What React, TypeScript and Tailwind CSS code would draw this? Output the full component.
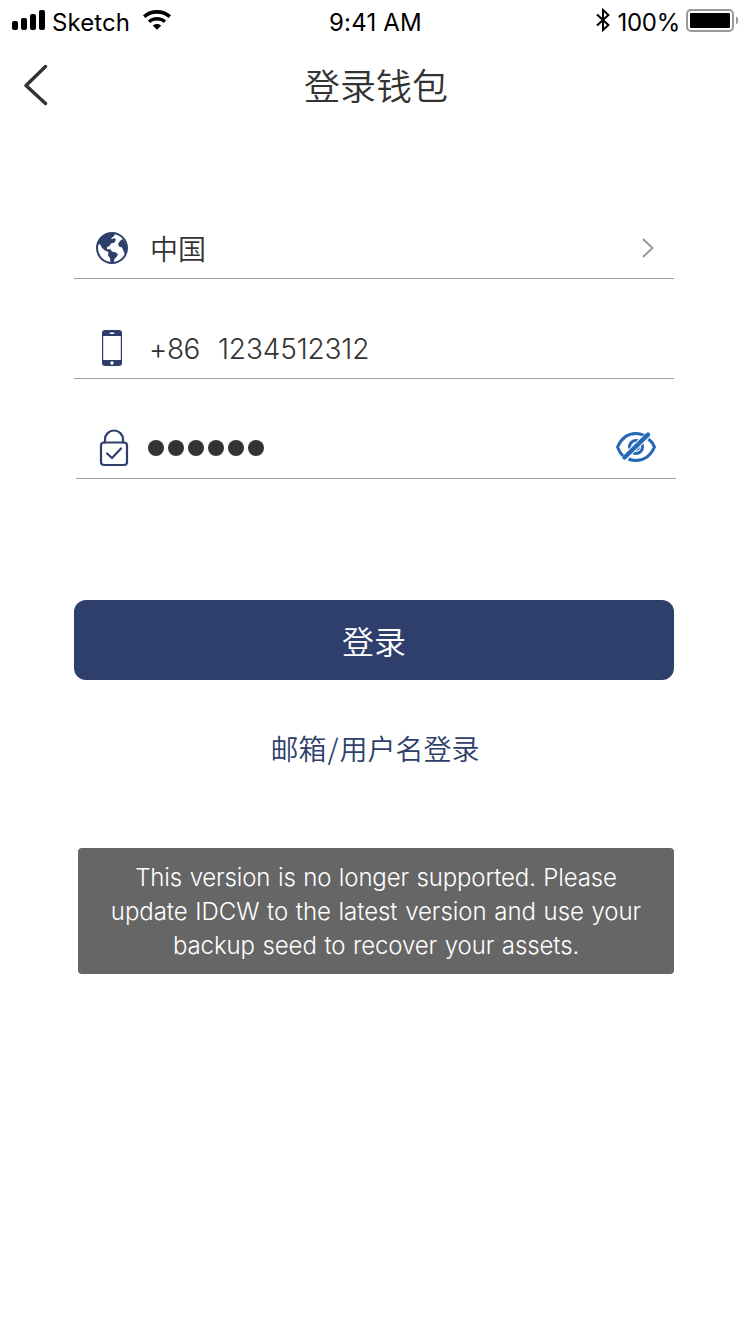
import type { ReactNode } from 'react';

function StatusBar() {
  return (
    <div className="flex h-10 items-center justify-between pl-3 pr-[11px] text-2xl leading-10 text-black">
      <div className="flex w-[240px] items-center">
        <svg width="34" height="20" viewBox="0 0 34 20" className="shrink-0">
          <rect x="0" y="11" width="6" height="9" rx="2" />
          <rect x="9" y="8" width="6" height="12" rx="2" />
          <rect x="18" y="4" width="6" height="16" rx="2" />
          <rect x="27" y="0" width="6" height="20" rx="2" />
        </svg>
        <span className="ml-[6px] mt-[5px] tracking-[0.1px]">Sketch</span>
        <svg width="28" height="20" viewBox="0 0 28 20" className="ml-[13px] shrink-0">
          <path d="M0 5.2C3.9 1.8 8.7 0 14 0s10.100 1.800 14 5.200L25.700 7.900C22.500 5.200 18.500 3.700 14 3.700S5.500 5.200 2.300 7.900Z" />
          <path d="M4.900 10.400C7.400 8.100 10.500 6.900 14 6.900s6.600 1.200 9.100 3.500L20.700 13C18.800 11.400 16.500 10.600 14 10.600S9.200 11.400 7.300 13Z" />
          <path d="M9.700 15.600C10.900 14.500 12.400 14 14 14s3.100.5 4.300 1.600L14 19.700Z" />
        </svg>
      </div>
      <span className="mt-[5px] whitespace-nowrap tracking-[0.2px]">9:41 AM</span>
      <div className="flex w-[240px] items-center justify-end">
        <svg width="14" height="24" viewBox="0 0 14 24" className="mr-2 shrink-0" fill="none" stroke="#000" strokeWidth="2">
          <path d="M1 6.500 12.400 17 7 22V2l5.400 5L1 17.500" />
        </svg>
        <span className="mt-[5px] tracking-[-0.3px]">100%</span>
        <svg width="53" height="23" viewBox="0 0 53 23" className="ml-[6px] shrink-0">
          <rect x="1" y="1" width="46" height="21" rx="4" fill="none" stroke="#999" strokeWidth="2" />
          <rect x="4" y="4" width="40" height="15" rx="1" />
          <path d="M50 7.500c3 1 3 7 0 8Z" fill="#999" />
        </svg>
      </div>
    </div>
  );
}

function Field({ icon, children }: { icon: ReactNode; children: ReactNode }) {
  return (
    <div className="flex h-[100px] w-[600px] items-end border-b border-[#9b9fa8] text-[28px] text-[#333]">
      <div className="flex h-[60px] flex-1 items-center pl-5 pr-4">
        <div className="flex w-9 justify-center">{icon}</div>
        {children}
      </div>
    </div>
  );
}

export default function App() {
  return (
    <div className="flex h-[1334px] w-[750px] flex-col bg-white font-['Inter','Noto_Sans_CJK_SC',sans-serif]">
      <StatusBar />
      <header className="grid h-[88px] grid-cols-[100px_1fr_100px] items-center">
        <button className="ml-6 w-6 pt-0.5" aria-label="返回">
          <svg width="24" height="42" viewBox="0 0 24 42" fill="none" stroke="#333" strokeWidth="3.400" strokeLinecap="round" strokeLinejoin="round">
            <path d="M21.500 2.500 2 21.500l19.500 18" />
          </svg>
        </button>
        <h1 className="pl-0.5 text-center font-['Noto_Sans_CJK_SC',sans-serif] text-4xl font-[350] text-[#333]">登录钱包</h1>
      </header>

      <main className="flex flex-col pl-[74px] pr-[76px] pt-[51px]">
        <Field
          icon={
            <svg width="32" height="32" viewBox="0 0 32 32">
              <circle cx="16" cy="16" r="15" fill="#fff" stroke="#2e3f6b" strokeWidth="2" />
              <path
                fill="#2e3f6b"
                d="M16 1 19 2.500 17.500 4.500 15.500 6 15.500 7.500 18 6 20 7.500 18.500 10.500 15 11.500 13.500 14 11 15 11 17.500 14 17 16 19.500 20 20.500 22 22.500 20.500 25 18.500 27 17.500 31 14.500 30.500 14 26 12 23.500 12.500 20 9 18.500 6 16 4 12 2 13C3 6 8 1.500 16 1Z"
              />
              <path fill="#2e3f6b" d="M26.500 7 24 9 22 12 23 14.500 26 15.500 27.500 19 29 22C32 18 31 11 26.500 7Z" />
            </svg>
          }
        >
          <span className="mb-px ml-5 flex-1 font-['Noto_Sans_CJK_SC',sans-serif] font-[350]">中国</span>
          <svg width="14" height="22" viewBox="0 0 14 22" className="mr-[3px]" fill="none" stroke="#999" strokeWidth="2">
            <path d="M2 2 11.500 11 2 20" />
          </svg>
        </Field>

        <Field
          icon={
            <svg width="20" height="36" viewBox="0 0 20 36">
              <rect width="20" height="36" rx="3" fill="#2e3f6b" />
              <rect x="1.200" y="6" width="17.600" height="24" fill="#fff" />
              <rect x="7.500" y="2.500" width="5" height="1.500" rx=".7" fill="#fff" />
              <circle cx="10" cy="33" r="1.700" fill="#fff" />
            </svg>
          }
        >
          <span className="ml-[19px] mt-px w-[69px] font-light tracking-[-0.4px]">+86</span>
          <span className="mt-px font-light tracking-[-0.15px]">1234512312</span>
        </Field>

        <div className="pl-0.5">
          <Field
            icon={
              <svg width="30" height="38" viewBox="0 0 30 38" fill="none" stroke="#2e3f6b" strokeWidth="2.200" strokeLinecap="round" strokeLinejoin="round">
                <path d="M6 13.500V10.500a9 9 0 0 1 18 0V13.500" />
                <rect x="2" y="13.500" width="26" height="22.500" rx="3" />
                <path d="m8 24.500 5 4.500 9-9.500" />
              </svg>
            }
          >
            <div className="ml-4 flex flex-1 gap-1">
              {[0, 1, 2, 3, 4, 5].map((n) => (
                <span key={n} className="size-4 rounded-full bg-[#333]" />
              ))}
            </div>
            <svg width="40" height="32" viewBox="0 0 40 32" className="mb-0.5 mr-1" fill="none" stroke="#2668b8" strokeWidth="3">
              <path d="M7 25C4.500 22.500 2.800 19.500 1.500 16 5.500 7 12 2.500 20 2.500c3 0 5.500.6 8 1.800" />
              <path d="M32.500 8c2.500 2 4.700 4.500 6 8-4 9-10.500 13.500-18.500 13.500-2.700 0-5.200-.5-7.500-1.500" />
              <circle cx="20" cy="16" r="6.500" strokeWidth="3" />
              <circle cx="20" cy="16" r="2.800" strokeWidth="2" />
              <path d="M11 24 29 6.500" stroke="#fff" strokeWidth="6.500" />
              <path d="M8.500 26.500 32 3.700" strokeWidth="4.400" strokeLinecap="round" />
            </svg>
          </Field>
        </div>

        <button className="mt-[121px] h-20 rounded-xl bg-[#2e3f6b] font-['Noto_Sans_CJK_SC',sans-serif] text-[32px] font-[350] text-white">
          登录
        </button>
        <button className="ml-0.5 mt-12 h-10 font-['Noto_Sans_CJK_SC',sans-serif] text-[28px] leading-10 font-[350] text-[#2e3f6b]">
          邮箱<span className="mx-px">/</span>用户名登录
        </button>

        <div className="ml-1 mt-20 flex h-[126px] flex-col rounded bg-[#666] pt-[13px] text-center text-2xl leading-[34px] font-light text-white [word-spacing:1px]">
          <span className="whitespace-nowrap tracking-[-0.15px]">This version is no longer supported. Please</span>
          <span className="whitespace-nowrap tracking-[-0.05px]">update IDCW to the latest version and use your</span>
          <span className="whitespace-nowrap tracking-[-0.1px]">backup seed to recover your assets.</span>
        </div>
      </main>
    </div>
  );
}
